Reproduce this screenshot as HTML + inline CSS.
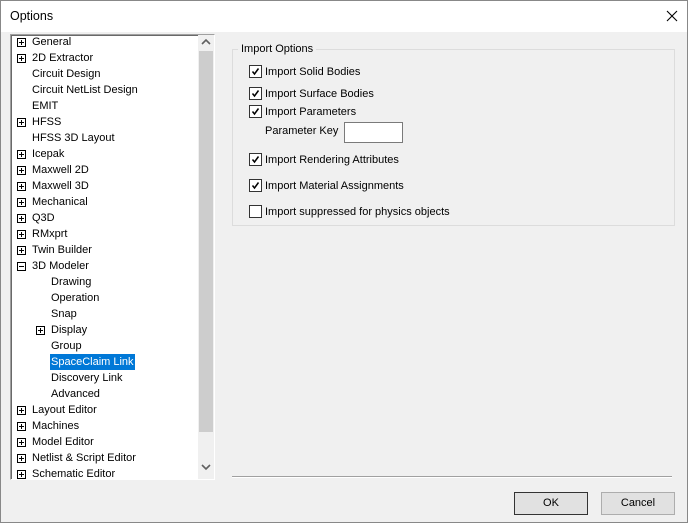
<!DOCTYPE html>
<html><head><style>
*{margin:0;padding:0;box-sizing:border-box}
body{width:688px;height:523px;background:#f0f0f0;font-family:"Liberation Sans",sans-serif;font-size:11px;color:#000;position:relative;overflow:hidden;border:1px solid #888;}
.abs{position:absolute}
.title{left:0;top:0;width:686px;height:31px;background:#fff}
.title span{position:absolute;left:9px;top:8px;font-size:12.5px}
.tree{left:9px;top:33px;width:205px;height:446px;background:#fff;border:1px solid;border-color:#a0a0a0 #fff #fff #a0a0a0;box-shadow:inset 1px 1px 0 #696969}
.row{position:absolute;height:16px;line-height:16px;white-space:nowrap}
.pb{position:absolute;width:9px;height:9px;border:1px solid #000;background:#fff}
.pb:before{content:"";position:absolute;left:1px;top:3px;width:5px;height:1px;background:#000}
.pb.p:after{content:"";position:absolute;left:3px;top:1px;width:1px;height:5px;background:#000}
.sb{left:197px;top:34px;width:16px;height:444px;background:#f0f0f0}
.cb{position:absolute;width:13px;height:13px;border:1px solid #333;background:#fff}
.lbl{position:absolute;white-space:nowrap}
.btn{position:absolute;height:23px;border:1px solid #adadad;background:#e1e1e1;text-align:center;line-height:21px}
</style></head><body>
<div class="abs title"><span>Options</span>
<svg class="abs" style="left:665px;top:9px" width="12" height="12"><path d="M1 1L11 11M11 1L1 11" stroke="#000" stroke-width="1.1"/></svg></div>
<div class="abs tree"></div>
<div id="rows"></div>
<div class="abs sb">
<svg class="abs" style="left:3px;top:3px" width="10" height="8"><path d="M1 6L5 2L9 6" stroke="#606060" stroke-width="1.6" fill="none"/></svg>
<div class="abs" style="left:1px;top:16px;width:14px;height:381px;background:#cdcdcd"></div>
<svg class="abs" style="left:3px;top:428px" width="10" height="8"><path d="M1 2L5 6L9 2" stroke="#606060" stroke-width="1.6" fill="none"/></svg>
</div>
<div class="abs" style="left:231px;top:48px;width:443px;height:177px;border:1px solid #dcdcdc"></div>
<div class="lbl" style="left:237px;top:42px;background:#f0f0f0;padding:0 3px">Import Options</div>
<div id="opts"></div>
<div class="abs" style="left:343px;top:121px;width:59px;height:21px;background:#fff;border:1px solid #7a7a7a"></div>
<div class="lbl" style="left:264px;top:124px">Parameter Key</div>
<div class="abs" style="left:231px;top:475px;width:440px;height:1px;background:#a0a0a0"></div>
<div class="abs" style="left:231px;top:476px;width:440px;height:1px;background:#fff"></div>
<div class="btn" style="left:513px;top:491px;width:74px;border-color:#333">OK</div>
<div class="btn" style="left:600px;top:491px;width:74px">Cancel</div>
<script>
var items=[[0,1,"General"],[0,1,"2D Extractor"],[0,0,"Circuit Design"],[0,0,"Circuit NetList Design"],[0,0,"EMIT"],[0,1,"HFSS"],[0,0,"HFSS 3D Layout"],[0,1,"Icepak"],[0,1,"Maxwell 2D"],[0,1,"Maxwell 3D"],[0,1,"Mechanical"],[0,1,"Q3D"],[0,1,"RMxprt"],[0,1,"Twin Builder"],[0,2,"3D Modeler"],[1,0,"Drawing"],[1,0,"Operation"],[1,0,"Snap"],[1,1,"Display"],[1,0,"Group"],[1,3,"SpaceClaim Link"],[1,0,"Discovery Link"],[1,0,"Advanced"],[0,1,"Layout Editor"],[0,1,"Machines"],[0,1,"Model Editor"],[0,1,"Netlist & Script Editor"],[0,1,"Schematic Editor"]];
var B=478,h="";
items.forEach(function(it,i){var y=33+16*i;var x=it[0]?50:31;
if(it[1]==1||it[1]==2){var bx=it[0]?35:16;var by=y+4;if(by+9<=B)h+='<div class="pb'+(it[1]==1?' p':'')+'" style="left:'+bx+'px;top:'+by+'px"></div>';else h+='<div class="pb p" style="left:'+bx+'px;top:'+by+'px;height:'+(B-by)+'px;border-bottom:0"></div>';}
var st='left:'+x+'px;top:'+y+'px;';
if(y+16>B)st+='height:'+(B-y)+'px;overflow:hidden;';
if(it[1]==3)st+='background:#0078d7;color:#fff;left:49px;padding:0 1px;';
h+='<div class="row" style="'+st+'">'+it[2].replace("&","&amp;")+'</div>';});
document.getElementById("rows").innerHTML=h;
var o=[[64,1,"Import Solid Bodies"],[86,1,"Import Surface Bodies"],[104,1,"Import Parameters"],[152,1,"Import Rendering Attributes"],[178,1,"Import Material Assignments"],[204,0,"Import suppressed for physics objects"]];
var g="";
o.forEach(function(a){g+='<div class="cb" style="left:248px;top:'+a[0]+'px">'+(a[1]?'<svg width="11" height="11" style="position:absolute;left:0;top:0"><path d="M2.5 5.5L4.5 8L8.5 2.5" stroke="#000" stroke-width="1.5" fill="none"/></svg>':'')+'</div><div class="lbl" style="left:264px;top:'+(a[0]+1)+'px">'+a[2]+'</div>';});
document.getElementById("opts").innerHTML=g;
</script>
</body></html>
